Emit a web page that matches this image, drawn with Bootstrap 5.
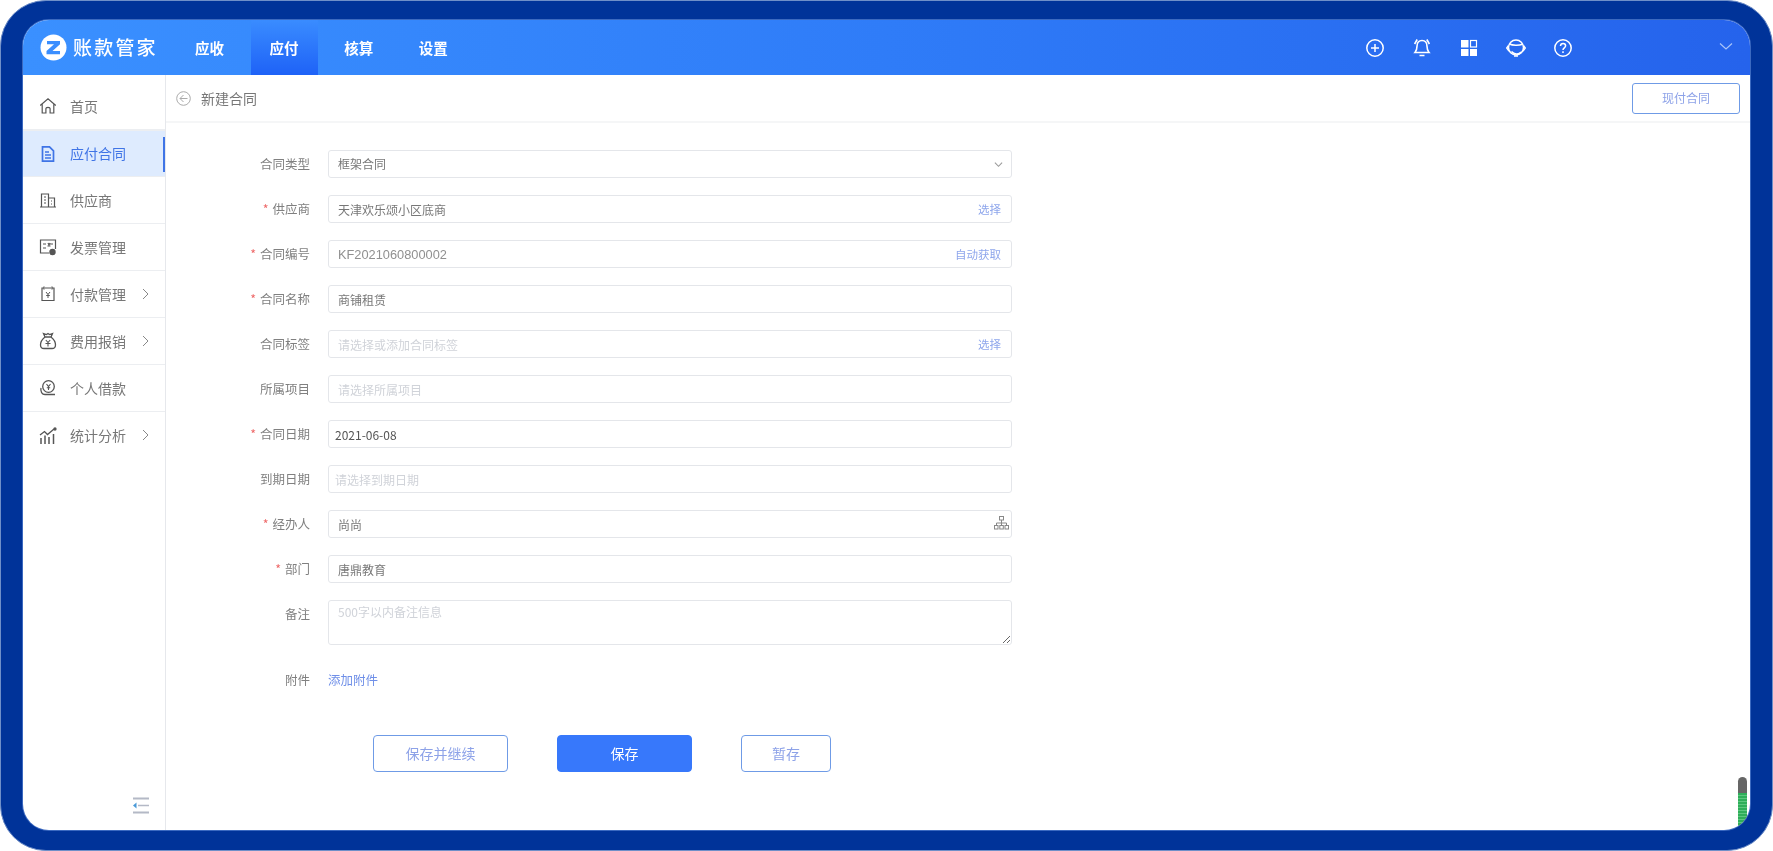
<!DOCTYPE html>
<html lang="zh-CN">
<head>
    <meta charset="UTF-8">
    <meta name="viewport" content="width=device-width, initial-scale=1.0">
    <title>新建合同</title>
    <link href="https://cdn.jsdelivr.net/npm/bootstrap@5.3.2/dist/css/bootstrap.min.css" rel="stylesheet">
    <style>
        html, body { height: 851px; overflow: hidden; background: #fff; }
        body { font-family: "Noto Sans CJK SC", "Liberation Sans", sans-serif; font-size: 12px; color: #666; }
        .frame { height: 851px; padding: 19px 22px; background: #003399; border: 1px solid #6f8fc8; border-radius: 46px; }
        .app { height: 810px; background: #fff; border-radius: 26px; overflow: hidden; position: relative; box-shadow: 0 0 0 1px rgba(130,170,240,.45); filter: blur(.4px); }
        .topbar { height: 55px; padding: 0; background: linear-gradient(90deg, #3a90ff 0%, #2f7cf8 50%, #2563ec 100%); flex-wrap: nowrap; justify-content: flex-start; }
        .logo-box { width: 153px; padding-left: 17px; gap: 6px; color: #fff; font-size: 19px; letter-spacing: 2.2px; font-weight: 500; }
        .top-nav { gap: 7.6px; }
        .top-nav .nav-link { width: 67px; height: 55px; line-height: 55px; padding: 0; text-align: center; color: #fff; font-size: 14.5px; font-weight: 700; }
        .top-nav .nav-link.active { color: #fff; background: linear-gradient(180deg, #3a8cff 0%, #1e62f7 100%); }
        .top-icons { margin-left: auto; gap: 27px; padding-right: 177px; }
        .top-icons svg { display: block; width: 20px; height: 20px; }
        .top-caret { position: absolute; right: 17px; top: 22px; }
        .side { width: 143px; flex: none; padding-top: 8px; border-right: 1px solid #e6e8ec; }
        .side .list-group-item { height: 47px; padding: 0 0 0 16px; gap: 13px; border-width: 0 0 1px; border-color: #eceef1; color: #777; font-size: 14px; position: relative; }
        .side .list-group-item.active { background: #deebfe; color: #3f74e6; border-color: #eceef1; margin-top: 0; }
        .side .list-group-item.active::after { content: ""; position: absolute; right: 0; top: 6px; height: 35px; width: 2px; background: #3f74e6; }
        .side-ico { width: 18px; height: 18px; flex: none; }
        .side-arrow { position: absolute; left: 119px; top: 17px; }
        .side-fold { margin: auto 0 16px 109px; display: block; }
        .sub-head { height: 48px; padding: 0 10px; border-bottom: 2px solid #f5f6f7; font-size: 14px; color: #777; gap: 10px; }
        .plain-btn { width: 108px; height: 31px; padding: 0; font-size: 12px; color: #8da2e8; background: #fff; border: 1px solid #6f9be6; border-radius: 3px; }
        .plain-btn:hover { color: #8da2e8; background: #fff; border-color: #6f9be6; }
        .the-form { padding-top: 27px; }
        .fld { margin-bottom: 17px; }
        .fld-label { width: 144px; flex: none; margin: 0 18px 0 0; padding: 0; text-align: right; line-height: 28px; color: #808080; font-size: 12.5px; }
        .fld-label i { font-style: normal; color: #ee6a6a; margin-right: 4px; }
        .fld-box { width: 684px; position: relative; }
        .fld-box .form-control, .fld-box .form-select { height: 28px; min-height: 0; padding: 0 60px 0 9px; font-size: 12px; line-height: 26px; color: #777; border: 1px solid #e4e6ea; border-radius: 3px; box-shadow: none; }
        .fld-box .form-select { background-image: url("data:image/svg+xml,%3csvg xmlns='http://www.w3.org/2000/svg' viewBox='0 0 10 7'%3e%3cpath fill='none' stroke='%23999' stroke-width='1.200' d='M1 1.500l4 4 4-4'/%3e%3c/svg%3e"); background-position: right 8px center; background-size: 9px 7px; }
        .fld-box .form-control::placeholder { color: #d0d3d9; opacity: 1; }
        .fld-box .tight.form-control { padding-left: 6px; color: #555; }
        .fld-box textarea.form-control { height: 45px; padding: 2px 9px; line-height: 18px; }
        .fld-box .form-control.code-val { color: #909090; font-family: "Liberation Sans", sans-serif; font-size: 12.8px; }
        .fld-side { position: absolute; right: 11px; top: 0; line-height: 28px; font-size: 11.5px; color: #8ea6ec; text-decoration: none; }
        .fld-org { position: absolute; right: 3px; top: 6px; }
        .file-row { margin-top: 21px; }
        .add-file { line-height: 28px; font-size: 12.5px; color: #6f8fe8; text-decoration: none; }
        .act-row { margin: 41px 0 0 207px; gap: 49px; }
        .act-row .btn { height: 37px; width: 135px; padding: 0; font-size: 14px; border-radius: 4px; }
        .act-row .short-btn { width: 90px; }
        .act-row .plain-btn { font-size: 14px; }
        .act-row .save-btn { background: #3778fb; border-color: #3778fb; color: #fff; }
        .meter { position: absolute; right: 3px; bottom: 0; width: 9px; height: 53px; border-radius: 5px 5px 0 0; background: #666; overflow: hidden; }
        .meter span { position: absolute; left: 0; right: 0; top: 16px; bottom: 0; background: repeating-linear-gradient(180deg, #2fae5a 0 2px, #5cc77f 2px 3px); }
    </style>
</head>
<body>
<div class="frame">
    <div class="app d-flex flex-column">
        <nav class="navbar topbar">
            <div class="logo-box d-flex align-items-center">
                <svg width="27" height="27" viewBox="0 0 27 27"><circle cx="13.5" cy="13.5" r="13" fill="#fff"/><path d="M7 7h13v3.2L12.5 17H20v3.2H6.5V17L14 10.2H7z" fill="#3a8eff"/></svg>
                <span>账款管家</span>
            </div>
            <ul class="nav top-nav">
                <li class="nav-item"><a class="nav-link" href="#">应收</a></li>
                <li class="nav-item"><a class="nav-link active" href="#">应付</a></li>
                <li class="nav-item"><a class="nav-link" href="#">核算</a></li>
                <li class="nav-item"><a class="nav-link" href="#">设置</a></li>
            </ul>
            <div class="top-icons d-flex align-items-center">
                <svg viewBox="0 0 20 20" fill="none" stroke="#fff" stroke-width="1.5"><circle cx="10" cy="10" r="8.2"/><path d="M10 6v8M6 10h8"/></svg>
                <svg viewBox="0 0 20 20" fill="none" stroke="#fff" stroke-width="1.6"><path d="M10 2.500c3.400 0 5 2.600 5 5.800 0 3 .8 4.800 2 6.200H3c1.200-1.400 2-3.200 2-6.200C5 5.100 6.600 2.500 10 2.500z"/><path d="M7.500 17.500h5M2.600 6 5.200 1.500M17.400 6 14.800 1.500"/></svg>
                <svg viewBox="0 0 20 20"><rect x="2" y="2" width="7.500" height="7.500" fill="#fff"/><rect x="11.500" y="2.500" width="6" height="6.500" fill="none" stroke="#fff" stroke-width="1.200"/><rect x="2" y="11" width="7.500" height="7" fill="#fff"/><rect x="11" y="11" width="7" height="7" fill="#fff"/></svg>
                <svg viewBox="0 0 20 20" fill="none" stroke="#fff" stroke-width="1.500"><circle cx="10" cy="9.500" r="7.500"/><path d="M2.600 7.500.7 10l2.300 3M17.400 7.500 19.300 10 17 13"/><path d="M3.500 6c3 1.500 9 1.800 13 .3M5.500 13.500c2.500 3 7.500 3.500 9.500 .5 M8 18h4"/></svg>
                <svg viewBox="0 0 20 20" fill="none" stroke="#fff" stroke-width="1.500"><circle cx="10" cy="10" r="8.200"/><path d="M7.500 8c0-1.600 1.100-2.600 2.600-2.600S12.600 6.400 12.600 7.800c0 2-2.600 2.100-2.600 4.200"/><path d="M10 13.300v1.600"/></svg>
            </div>
            <svg class="top-caret" width="14" height="9" viewBox="0 0 14 9" fill="none" stroke="#a9c4f8" stroke-width="1.200"><path d="M1 1.500 7 7l6-5.500"/></svg>
        </nav>
        <div class="d-flex flex-grow-1">
            <aside class="side d-flex flex-column">
                <div class="list-group list-group-flush">
                    <a href="#" class="list-group-item d-flex align-items-center">
                        <svg class="side-ico" viewBox="0 0 18 18" fill="none" stroke="#555" stroke-width="1.200"><path d="M1.200 8.500 9 1.800l7.800 6.700M3.200 7v9h3.700v-4.500c0-1.400 4.200-1.400 4.200 0V16h3.700V7"/></svg>
                        <span>首页</span></a>
                    <a href="#" class="list-group-item active d-flex align-items-center">
                        <svg class="side-ico" viewBox="0 0 18 18" fill="none" stroke="#3f74e6" stroke-width="1.700"><path d="M3.500 1.800h7l4 4v10.400h-11z"/><path d="M6 7h4M6 10h6M6 13h6"/></svg>
                        <span>应付合同</span></a>
                    <a href="#" class="list-group-item d-flex align-items-center">
                        <svg class="side-ico" viewBox="0 0 18 18" fill="none" stroke="#555" stroke-width="1.200"><path d="M1 16h16M2.500 16V3h7v13M9.500 7h6v9M5 6h2M5 9h2M5 12h2M12 10h1M12 13h1"/></svg>
                        <span>供应商</span></a>
                    <a href="#" class="list-group-item d-flex align-items-center">
                        <svg class="side-ico" viewBox="0 0 18 18" fill="none" stroke="#555" stroke-width="1.200"><path d="M10 15H1.500V2h15v9"/><path d="M4 6h3M11 6h3M4 10h3M9 5l1 2 1-2M8.500 8h3"/><circle cx="13.500" cy="14" r="2.600" fill="#555"/></svg>
                        <span>发票管理</span></a>
                    <a href="#" class="list-group-item d-flex align-items-center">
                        <svg class="side-ico" viewBox="0 0 18 18" fill="none" stroke="#555" stroke-width="1.200"><path d="M5 3H3v12.500h12V3h-2"/><path d="M5 1.500v3M13 1.500v3M6 3h6"/><path d="M7 7l2 2.500L11 7M9 9.500V13M7.200 10.500h3.600" stroke-width="1"/></svg>
                        <span>付款管理</span>
                        <svg class="side-arrow" width="7" height="12" viewBox="0 0 7 12" fill="none" stroke="#888" stroke-width="1"><path d="M1 1l5 5-5 5"/></svg></a>
                    <a href="#" class="list-group-item d-flex align-items-center">
                        <svg class="side-ico" viewBox="0 0 18 18" fill="none" stroke="#555" stroke-width="1.300"><path d="M6 5C3.500 7 1.500 10 1.500 13c0 2.500 1.500 3.500 3.500 3.500h8c2 0 3.500-1 3.500-3.500 0-3-2-6-4.500-8"/><path d="M6 5 4.500 1.500 7.500 2.500 9 1.500l1.500 1 3-1L12 5z"/><path d="M6.800 8 9 10.500 11.200 8M9 10.500V14.500M6.500 11.500h5" stroke-width="1.100"/></svg>
                        <span>费用报销</span>
                        <svg class="side-arrow" width="7" height="12" viewBox="0 0 7 12" fill="none" stroke="#888" stroke-width="1"><path d="M1 1l5 5-5 5"/></svg></a>
                    <a href="#" class="list-group-item d-flex align-items-center">
                        <svg class="side-ico" viewBox="0 0 18 18" fill="none" stroke="#555" stroke-width="1.300"><circle cx="9.500" cy="7.500" r="5.800"/><path d="M7.500 5l2 2.500L11.500 5M9.500 7.500V11M7.800 8.800h3.400" stroke-width="1.100"/><path d="M2 9c-.8 3.500 1 6.500 4 6.500h10"/></svg>
                        <span>个人借款</span></a>
                    <a href="#" class="list-group-item d-flex align-items-center">
                        <svg class="side-ico" viewBox="0 0 18 18" fill="none" stroke="#555" stroke-width="1.300"><path d="M1 8l4.500-3.500 3 3L15 2"/><path d="M2 11v6M6 8.500V17M10 10v7M14.500 7v10" stroke-width="1.500"/><circle cx="16" cy="2" r="1" fill="#555"/></svg>
                        <span>统计分析</span>
                        <svg class="side-arrow" width="7" height="12" viewBox="0 0 7 12" fill="none" stroke="#888" stroke-width="1"><path d="M1 1l5 5-5 5"/></svg></a>
                </div>
                <svg class="side-fold" width="17" height="17" viewBox="0 0 17 17"><path d="M1 1.500h16M1 15.500h16" stroke="#b4b9c6" stroke-width="2"/><path d="M6 8.500h11" stroke="#b4b9c6" stroke-width="1.600"/><path d="M4.500 5.500v6L1 8.500z" fill="#4a9ad8"/></svg>
            </aside>
            <main class="flex-grow-1">
                <div class="sub-head d-flex align-items-center">
                    <svg width="15" height="15" viewBox="0 0 15 15" fill="none" stroke="#aaa" stroke-width="1"><circle cx="7.500" cy="7.500" r="6.800"/><path d="M7.500 4 4 7.500 7.500 11M4 7.500h7.500"/></svg>
                    <span>新建合同</span>
                    <button type="button" class="btn plain-btn ms-auto">现付合同</button>
                </div>
                <form class="the-form">
                    <div class="fld d-flex">
                        <label class="fld-label">合同类型</label>
                        <div class="fld-box"><select class="form-select"><option>框架合同</option></select></div>
                    </div>
                    <div class="fld d-flex">
                        <label class="fld-label"><i>*</i>供应商</label>
                        <div class="fld-box"><input class="form-control" value="天津欢乐颂小区底商"><a class="fld-side">选择</a></div>
                    </div>
                    <div class="fld d-flex">
                        <label class="fld-label"><i>*</i>合同编号</label>
                        <div class="fld-box"><input class="form-control code-val" value="KF2021060800002"><a class="fld-side">自动获取</a></div>
                    </div>
                    <div class="fld d-flex">
                        <label class="fld-label"><i>*</i>合同名称</label>
                        <div class="fld-box"><input class="form-control" value="商铺租赁"></div>
                    </div>
                    <div class="fld d-flex">
                        <label class="fld-label">合同标签</label>
                        <div class="fld-box"><input class="form-control" placeholder="请选择或添加合同标签"><a class="fld-side">选择</a></div>
                    </div>
                    <div class="fld d-flex">
                        <label class="fld-label">所属项目</label>
                        <div class="fld-box"><input class="form-control" placeholder="请选择所属项目"></div>
                    </div>
                    <div class="fld d-flex">
                        <label class="fld-label"><i>*</i>合同日期</label>
                        <div class="fld-box"><input class="form-control tight" value="2021-06-08"></div>
                    </div>
                    <div class="fld d-flex">
                        <label class="fld-label">到期日期</label>
                        <div class="fld-box"><input class="form-control tight" placeholder="请选择到期日期"></div>
                    </div>
                    <div class="fld d-flex">
                        <label class="fld-label"><i>*</i>经办人</label>
                        <div class="fld-box"><input class="form-control" value="尚尚">
                            <svg class="fld-org" width="15" height="14" viewBox="0 0 15 14" fill="none" stroke="#888" stroke-width="1"><rect x="5.500" y=".5" width="4" height="3.500"/><path d="M7.500 4v3M2.500 9.500V7h10v2.500M7.500 7v2.500"/><rect x=".5" y="9.500" width="3.500" height="3.500"/><rect x="5.800" y="9.500" width="3.500" height="3.500"/><rect x="11" y="9.500" width="3.500" height="3.500"/></svg>
                        </div>
                    </div>
                    <div class="fld d-flex">
                        <label class="fld-label"><i>*</i>部门</label>
                        <div class="fld-box"><input class="form-control" value="唐鼎教育"></div>
                    </div>
                    <div class="fld d-flex">
                        <label class="fld-label">备注</label>
                        <div class="fld-box"><textarea class="form-control" placeholder="500字以内备注信息"></textarea></div>
                    </div>
                    <div class="d-flex file-row">
                        <label class="fld-label">附件</label>
                        <a href="#" class="add-file">添加附件</a>
                    </div>
                    <div class="act-row d-flex">
                        <button type="button" class="btn plain-btn">保存并继续</button>
                        <button type="button" class="btn save-btn">保存</button>
                        <button type="button" class="btn plain-btn short-btn">暂存</button>
                    </div>
                </form>
            </main>
        </div>
        <div class="meter"><span></span></div>
    </div>
</div>
<script src="https://cdn.jsdelivr.net/npm/bootstrap@5.3.2/dist/js/bootstrap.bundle.min.js"></script>
</body>
</html>
